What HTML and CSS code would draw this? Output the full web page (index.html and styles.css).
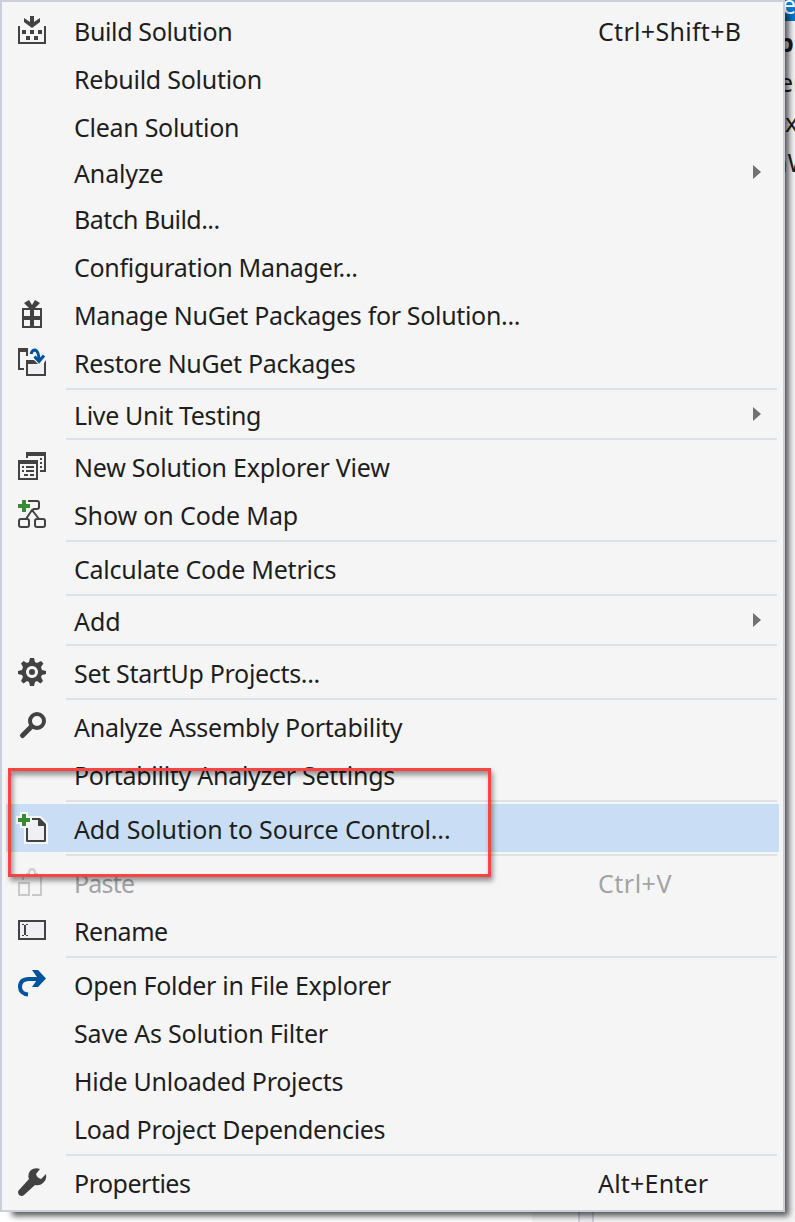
FILE: index.html
```html
<!DOCTYPE html>
<html lang="en">
<head>
<meta charset="utf-8">
<title>Solution context menu</title>
<link rel="stylesheet" href="styles.css">
</head>
<body>
<div class="desktop">
  <div class="panel">
    <div class="node node-selected">es</div>
    <div class="node node-bold">p</div>
    <div class="node node-e">er</div>
    <div class="node node-x">x</div>
    <div class="node node-w">nW</div>
  </div>
  <div class="strip"><div class="strip-white"></div><div class="splitter"></div></div>
  <div class="menu">
    <div class="item"><svg class="icon" viewBox="0 0 28 28"><path d="M0 10h2v16h24V10h2v18H0zM4 14h4v4H4zM12 14h4v4h-4zM20 14h4v4h-4zM8 20h4v4H8zM16 20h4v4h-4zM12 0h4v6l6-4v4l-8 6-8-6V2l6 4z"/></svg><span class="label l-build">Build Solution</span><span class="key k-build">Ctrl+Shift+B</span></div>
    <div class="item"><span class="label l-rebuild">Rebuild Solution</span></div>
    <div class="item"><span class="label l-clean">Clean Solution</span></div>
    <div class="item sub"><span class="label l-analyze">Analyze</span></div>
    <div class="item"><span class="label l-batch">Batch Build...</span></div>
    <div class="item"><span class="label l-config">Configuration Manager...</span></div>
    <div class="item"><svg class="icon" viewBox="0 0 28 28"><path fill-rule="evenodd" d="M4 8h20v20H4zM6 10v6h6v-6zM16 10v6h6v-6zM6 20v6h6v-6zM16 20v6h6v-6z"/><path d="M6 3l5-3 3 5 3-5 5 3-5 5h-6z"/></svg><span class="label l-manage">Manage NuGet Packages for Solution...</span></div>
    <div class="item"><svg class="icon" viewBox="0 0 28 28"><path d="M0 0h10v8H8V4H2v16h4v2H0zM8 12h8l4 4h-10v10h16V15l2-3v16H8z"/><path class="soft" d="M10 16h16v10H10z"/><path class="blue" d="M13 6q1-4 4-4 4 1 4 11M16.500 8.500l4.500 5 5-6"/></svg><span class="label l-restore">Restore NuGet Packages</span></div>
    <div class="sep"></div>
    <div class="item sub"><span class="label l-live">Live Unit Testing</span></div>
    <div class="sep"></div>
    <div class="item"><svg class="icon" viewBox="0 0 28 28"><path d="M8 0h20v20h-6v-2h4V4H10v2H8zM22 6h2v2h-2zM22 10h2v2h-2zM22 14h2v2h-2z"/><path fill-rule="evenodd" d="M0 8h20v20H0zM2 12v14h16V12z"/><path d="M4 14h2v2H4zM8 14h8v2H8zM4 18h2v2H4zM8 18h8v2H8zM6 22h4v2H6zM12 22h4v2h-4z"/></svg><span class="label l-new">New Solution Explorer View</span></div>
    <div class="item"><svg class="icon" viewBox="0 0 28 28"><path class="line" d="M10 1h9q2 0 2 2v4q0 2-2 2h-3l-2 1-6 9M14 10l7 9M3 19h6q2 0 2 2v4q0 2-2 2H3q-2 0-2-2v-4q0-2 2-2zM19 19h6q2 0 2 2v4q0 2-2 2h-6q-2 0-2-2v-4q0-2 2-2z"/><path class="green" d="M4 0h4v4h4v4H8v4H4V8H0V4h4z"/></svg><span class="label l-show">Show on Code Map</span></div>
    <div class="sep"></div>
    <div class="item"><span class="label l-calc">Calculate Code Metrics</span></div>
    <div class="sep"></div>
    <div class="item sub"><span class="label l-add">Add</span></div>
    <div class="sep"></div>
    <div class="item"><svg class="icon" viewBox="0 0 28 28"><path fill-rule="evenodd" d="M12 0h4l1 4 2 1 4-2 2.500 2.500L23 9l1 3 4 1v3l-4 1-1 2 2 4-2.500 2.500L19 23l-2 1-1 4h-4l-1-4-2-1-3.500 2.500L3 23l2-4-1-2-4-1v-3l4-1 1-3-2-3.500L5.500 3 9 5l2-1zM14 8a6 6 0 1 0 .01 0z"/><circle cx="14" cy="14" r="3"/></svg><span class="label l-set">Set StartUp Projects...</span></div>
    <div class="sep"></div>
    <div class="item"><svg class="icon" viewBox="0 0 28 28"><circle class="line thick" cx="19" cy="9" r="7"/><path class="line handle" d="M13 15l-8.500 8.500"/></svg><span class="label l-assembly">Analyze Assembly Portability</span></div>
    <div class="item"><span class="label l-port">Portability Analyzer Settings</span></div>
    <div class="sep"></div>
    <div class="item active"><svg class="icon" viewBox="0 0 28 28"><path class="halo" d="M8 4h14l6 6v18H8z"/><path class="halo" d="M4 0h4v4h4v4H8v4H4V8H0V4h4z"/><path class="paper" d="M10 6h11l5 6v14H10z"/><path d="M14 4h8l6 6v17l-1 1H9l-1-1V13h2v13h16V12h-6V6h-6z"/><path class="halo" d="M4 0h4v4h4v4H8v4H4V8H0V4h4z"/><path class="green" d="M4 0h4v4h4v4H8v4H4V8H0V4h4z"/></svg><span class="label l-source">Add Solution to Source Control...</span></div>
    <div class="sep"></div>
    <div class="item disabled"><svg class="icon" viewBox="0 0 28 28"><path d="M4 6h5v2H6v4H4zM19 6h5v22H14v-2h8V8h-3zM0 14h12v14H0zM2 16v10h8V16z" fill-rule="evenodd"/><path class="line" d="M9 8V6h2q0-5 3-5t3 5h2v2"/></svg><span class="label l-paste">Paste</span><span class="key k-paste">Ctrl+V</span></div>
    <div class="item"><svg class="icon" viewBox="0 0 28 28"><path class="paper" d="M2 6h24v16H2z"/><path fill-rule="evenodd" d="M0 4h28v20H0zM2 6v16h24V6z"/><path d="M4 8h2v1H4zM8 8h2v1H8zM6 9h2v10H6zM4 19h2v1H4zM8 19h2v1H8z"/></svg><span class="label l-rename">Rename</span></div>
    <div class="sep"></div>
    <div class="item"><svg class="icon" viewBox="0 0 28 28"><path class="blue arrow" d="M10 24.500C5 24 2 21 2 17q0-8 9-8h13"/><path class="blue-fill" d="M14 0h6l8 8.500-8 8.500h-6l6-8.500z"/></svg><span class="label l-open">Open Folder in File Explorer</span></div>
    <div class="item"><span class="label l-save">Save As Solution Filter</span></div>
    <div class="item"><span class="label l-hide">Hide Unloaded Projects</span></div>
    <div class="item"><span class="label l-load">Load Project Dependencies</span></div>
    <div class="sep"></div>
    <div class="item"><svg class="icon" viewBox="0 0 28 28"><path d="M22 1q-5-2-9 1-4 4-2 9L1 22q-2 2 0 5 3 2 5 0l11-10q5 1 8-2 4-3 3-9l-5 5q-4-1-5-5z"/></svg><span class="label l-prop">Properties</span><span class="key k-prop">Alt+Enter</span></div>
  </div>
  <div class="callout"></div>
</div>
</body>
</html>
```
FILE: styles.css
```css
* { box-sizing: border-box; }
body { margin: 0; }
.desktop {
  position: relative;
  width: 795px;
  height: 1222px;
  overflow: hidden;
  background: #f5f5f5;
  font-family: "Noto Sans", "Open Sans", sans-serif;
  font-size: 25px;
  color: #1e1e1e;
}
.menu {
  position: relative;
  width: 785px;
  height: 1212px;
  padding: 4px 4px 0;
  border: 2px solid #cccedb;
  background: #f5f5f5;
  box-shadow: 8px 8px 6px -4px rgba(0, 0, 0, .65);
}
.item {
  display: grid;
  grid-template-columns: 68px 524px 1fr;
  align-items: start;
  height: 48px;
  line-height: 48px;
  white-space: nowrap;
}
.sub { position: relative; height: 44px; line-height: 44px; }
.sub::after {
  content: "";
  position: absolute;
  left: 747px;
  top: 15px;
  border-left: 8px solid #717171;
  border-top: 7px solid transparent;
  border-bottom: 7px solid transparent;
}
.icon { grid-column: 1; grid-row: 1; width: 28px; height: 28px; margin: 10px 0 0 12px; overflow: visible; fill: #424242; }
.label { grid-column: 2; grid-row: 1; padding-top: 1px; }
.key { grid-column: 3; grid-row: 1; padding-top: 1px; }
.l-build { letter-spacing: -.36px; }
.l-rebuild { letter-spacing: -.26px; }
.l-clean { letter-spacing: -.28px; }
.l-analyze { letter-spacing: -.14px; }
.l-batch { letter-spacing: -.55px; }
.l-config { letter-spacing: -.29px; }
.l-manage { letter-spacing: -.33px; }
.l-restore { letter-spacing: -.32px; }
.l-live { letter-spacing: -.35px; }
.l-new { letter-spacing: -.23px; }
.l-show { letter-spacing: -.12px; }
.l-calc { letter-spacing: -.23px; }
.l-set { letter-spacing: -.32px; }
.l-assembly { letter-spacing: -.26px; }
.l-port { letter-spacing: -.28px; }
.l-source { letter-spacing: -.13px; }
.l-paste { letter-spacing: -.8px; }
.l-rename { letter-spacing: -.5px; }
.l-open { letter-spacing: -.29px; }
.l-save { letter-spacing: -.18px; }
.l-hide { letter-spacing: -.27px; }
.l-load { letter-spacing: -.31px; }
.l-prop { letter-spacing: -.5px; }
.k-build { letter-spacing: .3px; }
.k-paste { letter-spacing: .5px; }
.k-prop { letter-spacing: .2px; }
.sep { height: 6px; margin: 0 2px 0 60px; padding: 2px 0; }
.sep::before { content: ""; display: block; height: 2px; background: #dee1e5; }
.active { background: #c9def5; }
.disabled { color: #a2a4a5; }
.disabled .icon { fill: #c9c9c9; }
.line { fill: none; stroke: #424242; stroke-width: 2; }
.disabled .line { stroke: #c9c9c9; }
.thick { stroke-width: 4; }
.handle { stroke-width: 5; stroke-linecap: round; }
.green { fill: #388a34; }
.blue { fill: none; stroke: #00539c; stroke-width: 3; }
.arrow { stroke-width: 4; }
.blue-fill { fill: #00539c; }
.soft, .paper { fill: #f0eff1; }
.halo { fill: #f5f5f5; stroke: #f5f5f5; stroke-width: 4; }
.callout {
  position: absolute;
  left: 8px;
  top: 768px;
  width: 483px;
  height: 109px;
  border: 3px solid #fc4344;
  box-shadow: 2px 4px 5px rgba(0, 0, 0, .4), inset 2px 4px 5px rgba(0, 0, 0, .4);
}
.panel { position: absolute; left: 783px; top: 0; width: 12px; height: 1222px; overflow: hidden; }
.node { height: 40px; line-height: 42px; white-space: nowrap; }
.node-selected { height: 21px; line-height: 8px; background: #0079ce; color: #fff; text-indent: -1px; }
.node-bold { font-weight: 700; text-indent: -5px; }
.node-e { text-indent: -4px; }
.node-x { padding-left: 2px; }
.node-w { text-indent: -11px; }
.strip { position: absolute; left: 0; top: 1212px; width: 795px; height: 10px; display: flex; background: #f5f5f5; }
.strip-white { width: 532px; background: #fff; margin-right: 46px; }
.splitter { width: 16px; border: solid #cccedb; border-width: 0 2px; background: #ededf2; }
```
